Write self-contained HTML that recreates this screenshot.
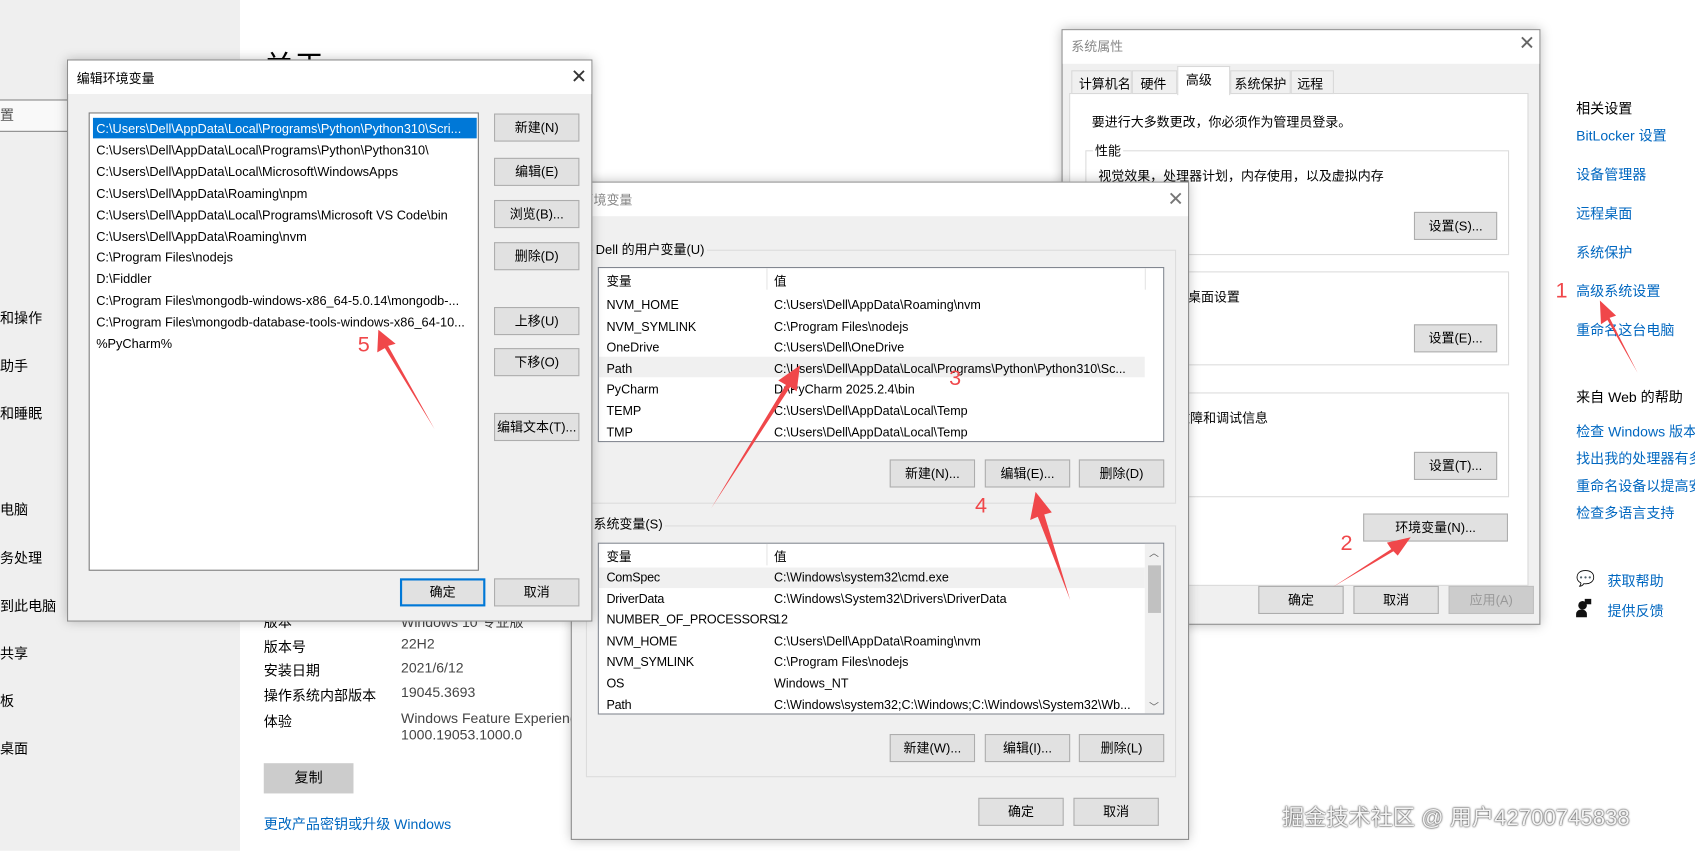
<!DOCTYPE html>
<html><head><meta charset="utf-8">
<style>
*{margin:0;padding:0;box-sizing:border-box}
body{width:1695px;height:851px;overflow:hidden;background:#fff;font-family:"Liberation Sans","Noto Sans CJK SC",sans-serif;}
#w{position:absolute;left:0;top:0;width:1568px;height:787px;transform:scale(1.081);transform-origin:0 0;font-size:12px;color:#000}
.a{position:absolute;white-space:nowrap}
.btn{position:absolute;background:#e1e1e1;border:1px solid #adadad;text-align:center;font-size:12px;line-height:24px;height:26px;width:79px}
.dlg{position:absolute;background:#f0f0f0;border:1px solid #8c8c8c;box-shadow:0 0 10px rgba(0,0,0,.25)}
.tb{position:absolute;left:0;top:0;right:0;height:31px;background:#fff}
.x{position:absolute;font-size:18px;color:#333;line-height:18px}
.grp{position:absolute;border:1px solid #dcdcdc}
.lv{position:absolute;background:#fff;border:1px solid #828790;overflow:hidden}
.side{font-size:13px}
.lk{color:#0067c0;font-size:13px}
</style></head><body>
<div id="w">
<div class="a" style="left:0;top:0;width:222px;height:787px;background:#efefef"></div>
<div class="a" style="left:0;top:92px;width:70px;height:30px;background:#f9f9f9;border-bottom:1px solid #888;border-top:1px solid #888"></div>
<div class="a side" style="left:0;top:96px;color:#555">置</div>
<div class="a side" style="left:0;top:284px">和操作</div>
<div class="a side" style="left:0;top:328px">助手</div>
<div class="a side" style="left:0;top:372px">和睡眠</div>
<div class="a side" style="left:0;top:461px">电脑</div>
<div class="a side" style="left:0;top:506px">务处理</div>
<div class="a side" style="left:0;top:550px">到此电脑</div>
<div class="a side" style="left:0;top:594px">共享</div>
<div class="a side" style="left:0;top:638px">板</div>
<div class="a side" style="left:0;top:682px">桌面</div>
<div class="a" style="left:244px;top:40px;font-size:28px">关于</div>
<div class="a" style="left:244px;top:565px;font-size:13px">版本</div>
<div class="a" style="left:371px;top:565px;font-size:13px;color:#444">Windows 10 专业版</div>
<div class="a" style="left:244px;top:588px;font-size:13px">版本号</div><div class="a" style="left:371px;top:588px;font-size:13px;color:#444">22H2</div>
<div class="a" style="left:244px;top:610px;font-size:13px">安装日期</div><div class="a" style="left:371px;top:610px;font-size:13px;color:#444">2021/6/12</div>
<div class="a" style="left:244px;top:633px;font-size:13px">操作系统内部版本</div><div class="a" style="left:371px;top:633px;font-size:13px;color:#444">19045.3693</div>
<div class="a" style="left:244px;top:657px;font-size:13px">体验</div><div class="a" style="left:371px;top:657px;font-size:13px;color:#444">Windows Feature Experience Pack<br>1000.19053.1000.0</div>
<div class="a" style="left:244px;top:706px;width:83px;height:28px;background:#ccc;text-align:center;line-height:28px;font-size:13px">复制</div>
<div class="a lk" style="left:244px;top:752px">更改产品密钥或升级 Windows</div>
<div class="a" style="left:1458px;top:90px;font-size:13px">相关设置</div>
<div class="a lk" style="left:1458px;top:115px">BitLocker 设置</div>
<div class="a lk" style="left:1458px;top:151px">设备管理器</div>
<div class="a lk" style="left:1458px;top:187px">远程桌面</div>
<div class="a lk" style="left:1458px;top:223px">系统保护</div>
<div class="a lk" style="left:1458px;top:259px">高级系统设置</div>
<div class="a lk" style="left:1458px;top:295px">重命名这台电脑</div>
<div class="a" style="left:1458px;top:357px;font-size:13px">来自 Web 的帮助</div>
<div class="a lk" style="left:1458px;top:389px">检查 Windows 版本</div>
<div class="a lk" style="left:1458px;top:414px">找出我的处理器有多</div>
<div class="a lk" style="left:1458px;top:439px">重命名设备以提高安</div>
<div class="a lk" style="left:1458px;top:464px">检查多语言支持</div>
<div class="a" style="left:1458px;top:527px;font-size:14px">💬</div><div class="a lk" style="left:1487px;top:527px">获取帮助</div>
<div class="a" style="left:1460px;top:556px;width:8px;height:8px;border-radius:50%;background:#111"></div>
<div class="a" style="left:1458px;top:564px;width:10px;height:7px;background:#111;border-radius:4px 4px 0 0"></div>
<div class="a" style="left:1466px;top:554px;width:6px;height:5px;background:#111"></div>
<div class="a lk" style="left:1487px;top:555px">提供反馈</div>

<div class="dlg" style="left:982px;top:27px;width:443px;height:551px">
 <div class="tb"></div>
 <div class="a" style="left:8px;top:6px;color:#888">系统属性</div>
 <div class="x" style="left:422px;top:3px;color:#666">✕</div>
 <div class="a" style="left:6px;top:58px;width:425px;height:456px;background:#fff;border:1px solid #d9d9d9"></div>
 <div class="a" style="left:8px;top:37px;width:56px;height:22px;border:1px solid #d9d9d9;background:#f0f0f0;padding:3px 6px">计算机名</div>
 <div class="a" style="left:64px;top:37px;width:42px;height:22px;border:1px solid #d9d9d9;background:#f0f0f0;padding:3px 7px">硬件</div>
 <div class="a" style="left:106px;top:33px;width:49px;height:27px;border:1px solid #d9d9d9;border-bottom:none;background:#fff;padding:3px 7px">高级</div>
 <div class="a" style="left:155px;top:37px;width:56px;height:22px;border:1px solid #d9d9d9;background:#f0f0f0;padding:3px 3px">系统保护</div>
 <div class="a" style="left:211px;top:37px;width:40px;height:22px;border:1px solid #d9d9d9;background:#f0f0f0;padding:3px 5px">远程</div>
 <div class="a" style="left:27px;top:76px">要进行大多数更改，你必须作为管理员登录。</div>
 <div class="grp" style="left:21px;top:111px;width:392px;height:97px"></div>
 <div class="a" style="left:28px;top:103px;background:#fff;padding:0 2px">性能</div>
 <div class="a" style="left:33px;top:126px">视觉效果，处理器计划，内存使用，以及虚拟内存</div>
 <div class="btn" style="left:325px;top:168px;width:77px">设置(S)...</div>
 <div class="grp" style="left:21px;top:223px;width:392px;height:87px"></div>
 <div class="a" style="left:104px;top:238px">的桌面设置</div>
 <div class="btn" style="left:325px;top:272px;width:77px">设置(E)...</div>
 <div class="grp" style="left:21px;top:335px;width:392px;height:97px"></div>
 <div class="a" style="left:106px;top:350px">故障和调试信息</div>
 <div class="btn" style="left:325px;top:390px;width:77px">设置(T)...</div>
 <div class="btn" style="left:278px;top:447px;width:134px">环境变量(N)...</div>
 <div class="btn" style="left:181px;top:514px">确定</div>
 <div class="btn" style="left:269px;top:514px">取消</div>
 <div class="btn" style="left:357px;top:514px;color:#999;background:#ccc;border-color:#bfbfbf">应用(A)</div>
</div>

<div class="dlg" style="left:528px;top:168px;width:572px;height:609px">
 <div class="tb"></div>
 <div class="a" style="left:8px;top:7px;color:#888">环境变量</div>
 <div class="x" style="left:551px;top:6px;color:#777">✕</div>
 <div class="grp" style="left:13px;top:62px;width:546px;height:235px"></div>
 <div class="a" style="left:20px;top:53px;background:#f0f0f0;padding:0 2px">Dell 的用户变量(U)</div>
 <div class="lv" style="left:24px;top:78px;width:524px;height:162px;font-size:11.6px">
  <div class="a" style="left:7px;top:4px">变量</div><div class="a" style="left:162px;top:4px">值</div>
  <div class="a" style="left:155px;top:0;width:1px;height:20px;background:#e5e5e5"></div>
  <div class="a" style="left:505px;top:0;width:1px;height:20px;background:#e5e5e5"></div>
  <div class="a" style="left:0;top:82px;width:505px;height:19px;background:#f0f0f0"></div>
  <div class="a" style="left:7px;top:25px;line-height:19.6px">NVM_HOME<br>NVM_SYMLINK<br>OneDrive<br>Path<br>PyCharm<br>TEMP<br>TMP</div>
  <div class="a" style="left:162px;top:25px;line-height:19.6px">C:\Users\Dell\AppData\Roaming\nvm<br>C:\Program Files\nodejs<br>C:\Users\Dell\OneDrive<br>C:\Users\Dell\AppData\Local\Programs\Python\Python310\Sc...<br>D:\PyCharm 2025.2.4\bin<br>C:\Users\Dell\AppData\Local\Temp<br>C:\Users\Dell\AppData\Local\Temp</div>
 </div>
 <div class="btn" style="left:294px;top:256px">新建(N)...</div>
 <div class="btn" style="left:382px;top:256px">编辑(E)...</div>
 <div class="btn" style="left:469px;top:256px">删除(D)</div>
 <div class="grp" style="left:13px;top:317px;width:546px;height:233px"></div>
 <div class="a" style="left:18px;top:307px;background:#f0f0f0;padding:0 2px">系统变量(S)</div>
 <div class="lv" style="left:24px;top:333px;width:524px;height:159px;font-size:11.6px">
  <div class="a" style="left:7px;top:4px">变量</div><div class="a" style="left:162px;top:4px">值</div>
  <div class="a" style="left:155px;top:0;width:1px;height:20px;background:#e5e5e5"></div>
  <div class="a" style="left:0;top:22px;width:505px;height:19px;background:#f0f0f0"></div>
  <div class="a" style="left:505px;top:0;width:18px;height:159px;background:#f0f0f0"></div>
  <div class="a" style="left:508px;top:20px;width:12px;height:44px;background:#c1c1c1"></div>
  <div class="a" style="left:509px;top:2px;font-size:9px;color:#555">︿</div>
  <div class="a" style="left:509px;top:144px;font-size:9px;color:#555">﹀</div>
  <div class="a" style="left:7px;top:22px;line-height:19.6px;letter-spacing:-0.2px">ComSpec<br>DriverData<br>NUMBER_OF_PROCESSORS<br>NVM_HOME<br>NVM_SYMLINK<br>OS<br>Path</div>
  <div class="a" style="left:162px;top:22px;line-height:19.6px">C:\Windows\system32\cmd.exe<br>C:\Windows\System32\Drivers\DriverData<br>12<br>C:\Users\Dell\AppData\Roaming\nvm<br>C:\Program Files\nodejs<br>Windows_NT<br>C:\Windows\system32;C:\Windows;C:\Windows\System32\Wb...</div>
 </div>
 <div class="btn" style="left:294px;top:510px">新建(W)...</div>
 <div class="btn" style="left:382px;top:510px">编辑(I)...</div>
 <div class="btn" style="left:469px;top:510px">删除(L)</div>
 <div class="btn" style="left:376px;top:569px">确定</div>
 <div class="btn" style="left:464px;top:569px">取消</div>
</div>

<div class="dlg" style="left:62px;top:55px;width:486px;height:520px">
 <div class="tb"></div>
 <div class="a" style="left:8px;top:8px">编辑环境变量</div>
 <div class="x" style="left:465px;top:6px">✕</div>
 <div class="lv" style="left:19px;top:48px;width:361px;height:424px;border-color:#7a7a7a">
  <div class="a" style="left:3px;top:4px;width:355px;height:19px;background:#0078d7"></div>
  <div class="a" style="left:0;top:0;width:359px;height:424px;background:repeating-linear-gradient(to bottom,transparent 0,transparent 22.6px,#ececec 22.6px,#ececec 23.6px);background-size:100% 19.9px"></div>
  <div class="a" style="left:6px;top:5px;line-height:19.9px;font-size:11.8px">
   <span style="color:#fff">C:\Users\Dell\AppData\Local\Programs\Python\Python310\Scri...</span><br>C:\Users\Dell\AppData\Local\Programs\Python\Python310\<br>C:\Users\Dell\AppData\Local\Microsoft\WindowsApps<br>C:\Users\Dell\AppData\Roaming\npm<br>C:\Users\Dell\AppData\Local\Programs\Microsoft VS Code\bin<br>C:\Users\Dell\AppData\Roaming\nvm<br>C:\Program Files\nodejs<br>D:\Fiddler<br>C:\Program Files\mongodb-windows-x86_64-5.0.14\mongodb-...<br>C:\Program Files\mongodb-database-tools-windows-x86_64-10...<br>%PyCharm%</div>
 </div>
 <div class="btn" style="left:394px;top:49px">新建(N)</div>
 <div class="btn" style="left:394px;top:90px">编辑(E)</div>
 <div class="btn" style="left:394px;top:129px">浏览(B)...</div>
 <div class="btn" style="left:394px;top:168px">删除(D)</div>
 <div class="btn" style="left:394px;top:228px">上移(U)</div>
 <div class="btn" style="left:394px;top:266px">下移(O)</div>
 <div class="btn" style="left:394px;top:326px">编辑文本(T)...</div>
 <div class="btn" style="left:307px;top:479px;border:2px solid #0078d7;line-height:22px">确定</div>
 <div class="btn" style="left:394px;top:479px">取消</div>
</div>

<svg class="a" style="left:0;top:0" width="1568" height="787" viewBox="0 0 1568 787">
 <g fill="#f0474a">
  <polygon points="402,397 356,322 349,326 350,305 366,318 359,320"/>
  <polygon points="658,470 727,356 720,352 740,338 737,362 731,358"/>
  <polygon points="990,555 960,478 953,481 958,455 973,474 966,476"/>
  <polygon points="1233,543 1287,508 1283,502 1305,497 1293,514 1289,510"/>
  <polygon points="1515,345 1487,296 1481,300 1480,278 1495,292 1489,294"/>
 </g>
 <g fill="#f0474a" font-family="Liberation Sans" font-size="20">
  <text x="331" y="325">5</text><text x="878" y="356">3</text><text x="902" y="474">4</text><text x="1240" y="509">2</text><text x="1439" y="275">1</text>
 </g>
</svg>
<div class="a" style="left:1186px;top:739px;font-size:20.5px;color:#f4f4f4;text-shadow:0 0 2px #444,0 0 1px #333">掘金技术社区 @ 用户42700745838</div>
</div>
</body></html>
